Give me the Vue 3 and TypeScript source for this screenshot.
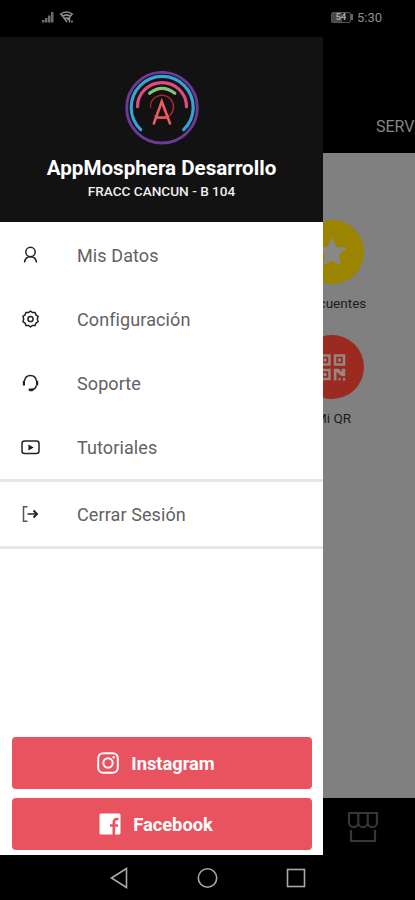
<script setup lang="ts">
type IconName = 'user' | 'gear' | 'headset' | 'video' | 'logout'

interface MenuItem {
  id: IconName
  label: string
}

const menu: MenuItem[] = [
  { id: 'user', label: 'Mis Datos' },
  { id: 'gear', label: 'Configuración' },
  { id: 'headset', label: 'Soporte' },
  { id: 'video', label: 'Tutoriales' },
]
const session: MenuItem[] = [{ id: 'logout', label: 'Cerrar Sesión' }]
const groups: MenuItem[][] = [menu, session]
</script>

<template>
  <div class="phone">
    <header class="status">
      <div class="signals">
        <svg width="12" height="12" viewBox="0 0 12 12" fill="#6c6c6c">
          <path d="M0 9h2.500v2.500H0zM3 7h2.500v4.500H3zM6 4.500h2.500v7H6zM9 1h2.500v10.500H9z" />
        </svg>
        <svg width="15" height="13" viewBox="0 0 15 13" fill="none" stroke="#8c8c8c" stroke-width="1.500">
          <path d="M1 3.500Q7.500-1.500 14 3.500M3 5.800Q7.500 2 12 5.800M5 8q2.500-2 5 0M2 3l6 8M13 3L8.500 9M10.500 7v4.500M13 9.500v2" />
        </svg>
      </div>
      <div class="power">
        <div class="battery"><span>54</span></div>
        <i class="tip"></i>
        <span class="clock">5:30</span>
      </div>
    </header>

    <main class="body">
      <aside class="drawer">
        <div class="profile">
          <svg class="logo" width="74" height="74" viewBox="0 0 74 74" fill="none" stroke-linecap="round">
            <circle cx="37" cy="36.700" r="35.300" stroke="#6d3a98" stroke-width="2.900" />
            <path d="M15.700 58.700A31 31 0 1 1 58.700 58.700" stroke="#36a4d6" stroke-width="3.200" />
            <path d="M12.500 35.700A24.500 24 0 0 1 61.500 35.700" stroke="#e04a80" stroke-width="3.200" />
            <path d="M24.600 22.300Q37 12.300 49.800 22.300" stroke="#84c47a" stroke-width="3.200" />
            <circle cx="37" cy="35.800" r="11.500" stroke="#b3262f" stroke-width="1.400" stroke-dasharray="62 11" stroke-dashoffset="-4" transform="rotate(158 37 35.800)" />
            <path d="M28.800 52.500L36.800 30.500 45 52.500M32 46.500h10" stroke="#ef5a62" stroke-width="2.600" />
          </svg>
          <h1>AppMosphera Desarrollo</h1>
          <p>FRACC CANCUN - B 104</p>
        </div>

        <nav class="menu">
          <ul v-for="(group, i) in groups" :key="i">
            <li v-for="item in group" :key="item.id">
              <svg class="icon" width="20" height="20" viewBox="0 0 20 20" fill="none" stroke="#222" stroke-width="1.500">
                <template v-if="item.id === 'user'">
                  <circle cx="10.500" cy="7" r="4.700" />
                  <path d="M4.500 17.500c.4-3.600 2.600-5.800 6-5.800s5.600 2.200 6 5.800" />
                </template>
                <template v-else-if="item.id === 'gear'">
                  <path d="M10.500 2l2 1.600 2.600-.1.800 2.400 2.200 1.500L17.300 10l.8 2.600-2.200 1.500-.8 2.400-2.600-.1L10.500 18l-2-1.600-2.600.1-.8-2.400-2.200-1.500.8-2.600-.8-2.600 2.200-1.500.8-2.400 2.600.1z" stroke-linejoin="round" />
                  <circle cx="10.500" cy="10" r="2.600" />
                </template>
                <template v-else-if="item.id === 'headset'">
                  <path d="M4.500 8C5 4.200 7.200 2.400 10.400 2.400S15.900 4.200 16.400 8M16.400 12.500c-.5 2.500-2 3.800-4.700 4.300" />
                  <path d="M3.900 7.800v4.800M17.100 7.800v4.800" stroke-width="2.200" />
                  <path d="M9.900 16.800h2.400" stroke-width="2.800" stroke-linecap="round" />
                </template>
                <template v-else-if="item.id === 'video'">
                  <rect x="2" y="4" width="17" height="12.600" rx="2.500" />
                  <path d="M8.400 7.400l5.400 3-5.400 3z" fill="#222" stroke="none" />
                </template>
                <template v-else>
                  <path d="M7.500 2.700H3.500v14.600h4" stroke="#555" />
                  <path d="M7.500 10H16" />
                  <path d="M13.500 6.500L17 10l-3.500 3.500" stroke-width="2" />
                </template>
              </svg>
              <span>{{ item.label }}</span>
            </li>
          </ul>
        </nav>

        <div class="social">
          <button type="button" class="instagram">
            <svg width="22" height="22" viewBox="0 0 22 22" fill="none" stroke="#fff" stroke-width="2">
              <rect x="1.200" y="1.200" width="19.600" height="19.600" rx="5" />
              <circle cx="11" cy="11" r="4.700" />
              <circle cx="16.700" cy="5.300" r="1.200" fill="#fff" stroke="none" />
            </svg>
            <span>Instagram</span>
          </button>
          <button type="button" class="facebook">
            <svg width="22" height="22" viewBox="0 0 22 22">
              <rect x=".5" y=".5" width="21" height="21" rx="1.500" fill="#fff" />
              <path d="M14.800 22v-8.300M11 12.500h8M14.800 14V9.200q0-3.200 3.200-3.200h1.500" fill="none" stroke="#e9535f" stroke-width="2.600" />
            </svg>
            <span>Facebook</span>
          </button>
        </div>
      </aside>

      <section class="page">
        <div class="tabs">SERVICIOS</div>
        <div class="content">
          <div class="tile">
            <div class="disc yellow">
              <svg width="34" height="34" viewBox="0 0 34 34">
                <path d="M17 2.500l4.300 9.200 10.200 1.300-7.500 7 1.900 10.200L17 25.400 8.100 30.200 10 20l-7.500-7 10.200-1.300z" fill="#888" />
              </svg>
            </div>
            <span>Frecuentes</span>
          </div>
          <div class="tile">
            <div class="disc red">
              <svg width="27" height="27" viewBox="0 0 27 27" fill="none" stroke="#968780" stroke-width="2.500">
                <path d="M1.500 1.500h9v9h-9zM16 1.500h9v9h-9zM1.500 16h9v9h-9z" />
                <path d="M4.500 4.500h3v3h-3zM19 4.500h3v3h-3zM4.500 19h3v3h-3zM14.800 14.800h5l3 3.200v-3.200h3.400v7.400h-3.500L17.500 18v8.500h-2.700zM19.500 24h2v2.500h-2zM24 24h2.200v2.500H24z" fill="#968780" stroke="none" />
              </svg>
            </div>
            <span>Mi QR</span>
          </div>
        </div>
        <div class="bottom">
          <svg width="32" height="33" viewBox="0 0 32 33" fill="none" stroke="#363636" stroke-width="2.200">
            <path d="M2 2h28v9.500a4.500 4.500 0 0 1-9.300 0 4.700 4.700 0 0 1-9.400 0 4.500 4.500 0 0 1-9.300 0zM11.300 2v9.500M20.700 2v9.500M4 19v11h24V19" />
          </svg>
        </div>
      </section>
    </main>

    <footer class="keys">
      <svg width="18" height="22" viewBox="0 0 18 22"><path d="M1.500 11L16.500 1.500v19z" /></svg>
      <svg width="22" height="22" viewBox="0 0 22 22"><circle cx="11.500" cy="11" r="9.200" /></svg>
      <svg width="20" height="20" viewBox="0 0 20 20"><rect x="1.500" y="1.500" width="17" height="17" /></svg>
    </footer>
  </div>
</template>

<style>
body {
  background: #000;
}
</style>

<style scoped>
.phone {
  width: 415px;
  height: 900px;
  display: flex;
  flex-direction: column;
  overflow: hidden;
  background: #000;
  font-family: Roboto, sans-serif;
}
.status {
  height: 37px;
  flex: none;
  box-sizing: border-box;
  padding: 0 33px 3px 42px;
  display: flex;
  align-items: center;
  justify-content: space-between;
  color: #8d8d8d;
}
.signals {
  display: flex;
  gap: 5px;
}
.power {
  display: flex;
  align-items: center;
}
.battery {
  width: 20px;
  height: 11px;
  box-sizing: border-box;
  border: 1px solid #555;
  border-radius: 2px;
  background: linear-gradient(90deg, #484848 55%, #111 55%);
  display: flex;
  align-items: center;
  justify-content: center;
  font-size: 9px;
  font-weight: 700;
  color: #aaa;
}
.tip {
  width: 2px;
  height: 6px;
  margin-right: 4px;
  background: #666;
}
.clock {
  font-size: 13px;
  font-weight: 400;
}
.body {
  flex: 1;
  min-height: 0;
  display: grid;
  grid-template-columns: 323px 92px;
}
.drawer {
  display: flex;
  flex-direction: column;
  background: #fff;
  min-height: 0;
}
.profile {
  height: 185px;
  box-sizing: border-box;
  padding-top: 34px;
  background: #121212;
  display: flex;
  flex-direction: column;
  align-items: center;
  color: #fff;
}
.logo {
  flex: none;
}
h1 {
  margin: 11px 0 0;
  font-size: 20.600px;
  line-height: 24px;
  font-weight: 700;
  white-space: nowrap;
}
.profile p {
  margin: 3px 0 0;
  font-size: 13.600px;
  line-height: 16px;
  font-weight: 500;
  color: #eee;
}
ul {
  margin: 0;
  padding: 0;
  list-style: none;
  border-bottom: 3px solid #e7e7e7;
}
.menu {
  padding-top: 1px;
}
li {
  height: 64px;
  display: flex;
  align-items: center;
  gap: 37px;
  padding-left: 20px;
  font-size: 18px;
  letter-spacing: 0.100px;
  color: #626262;
}
.social {
  margin-top: auto;
  padding: 0 11px 5px 12px;
  display: grid;
  gap: 9px;
}
button {
  height: 52px;
  border: 0;
  border-radius: 4px;
  background: #e9535f;
  color: #fff;
  font: 700 18.300px Roboto, sans-serif;
  display: flex;
  align-items: center;
  justify-content: center;
  gap: 12px;
  padding: 0 12px 0 0;
}
button span {
  padding-top: 1px;
}
.page {
  display: flex;
  flex-direction: column;
  overflow: hidden;
  background: #808080;
}
.tabs {
  height: 116px;
  box-sizing: border-box;
  padding: 80px 0 0 53px;
  background: #000;
  color: #858585;
  font-size: 16px;
  line-height: 20px;
}
.content {
  flex: 1;
  padding-top: 67px;
  margin-left: -31px;
  width: 80px;
  display: flex;
  flex-direction: column;
  gap: 22px;
}
.tile {
  display: flex;
  flex-direction: column;
  align-items: center;
  gap: 11px;
  height: 93px;
  font-size: 13.500px;
  line-height: 16px;
  color: #1c1c1c;
}
.tile span {
  padding-left: 2px;
}
.disc {
  width: 64px;
  height: 64px;
  border-radius: 50%;
  display: grid;
  place-items: center;
}
.yellow {
  background: #9b8500;
}
.red {
  background: #9b2a20;
}
.bottom {
  height: 57px;
  box-sizing: border-box;
  background: #000;
  display: flex;
  align-items: center;
  padding: 2px 0 0 24px;
}
.keys {
  height: 45px;
  flex: none;
  display: flex;
  align-items: center;
  justify-content: space-between;
  box-sizing: border-box;
  padding: 0 109px 0 110px;
}
.keys svg {
  fill: none;
  stroke: #a8a8a8;
  stroke-width: 1.600;
}
</style>
